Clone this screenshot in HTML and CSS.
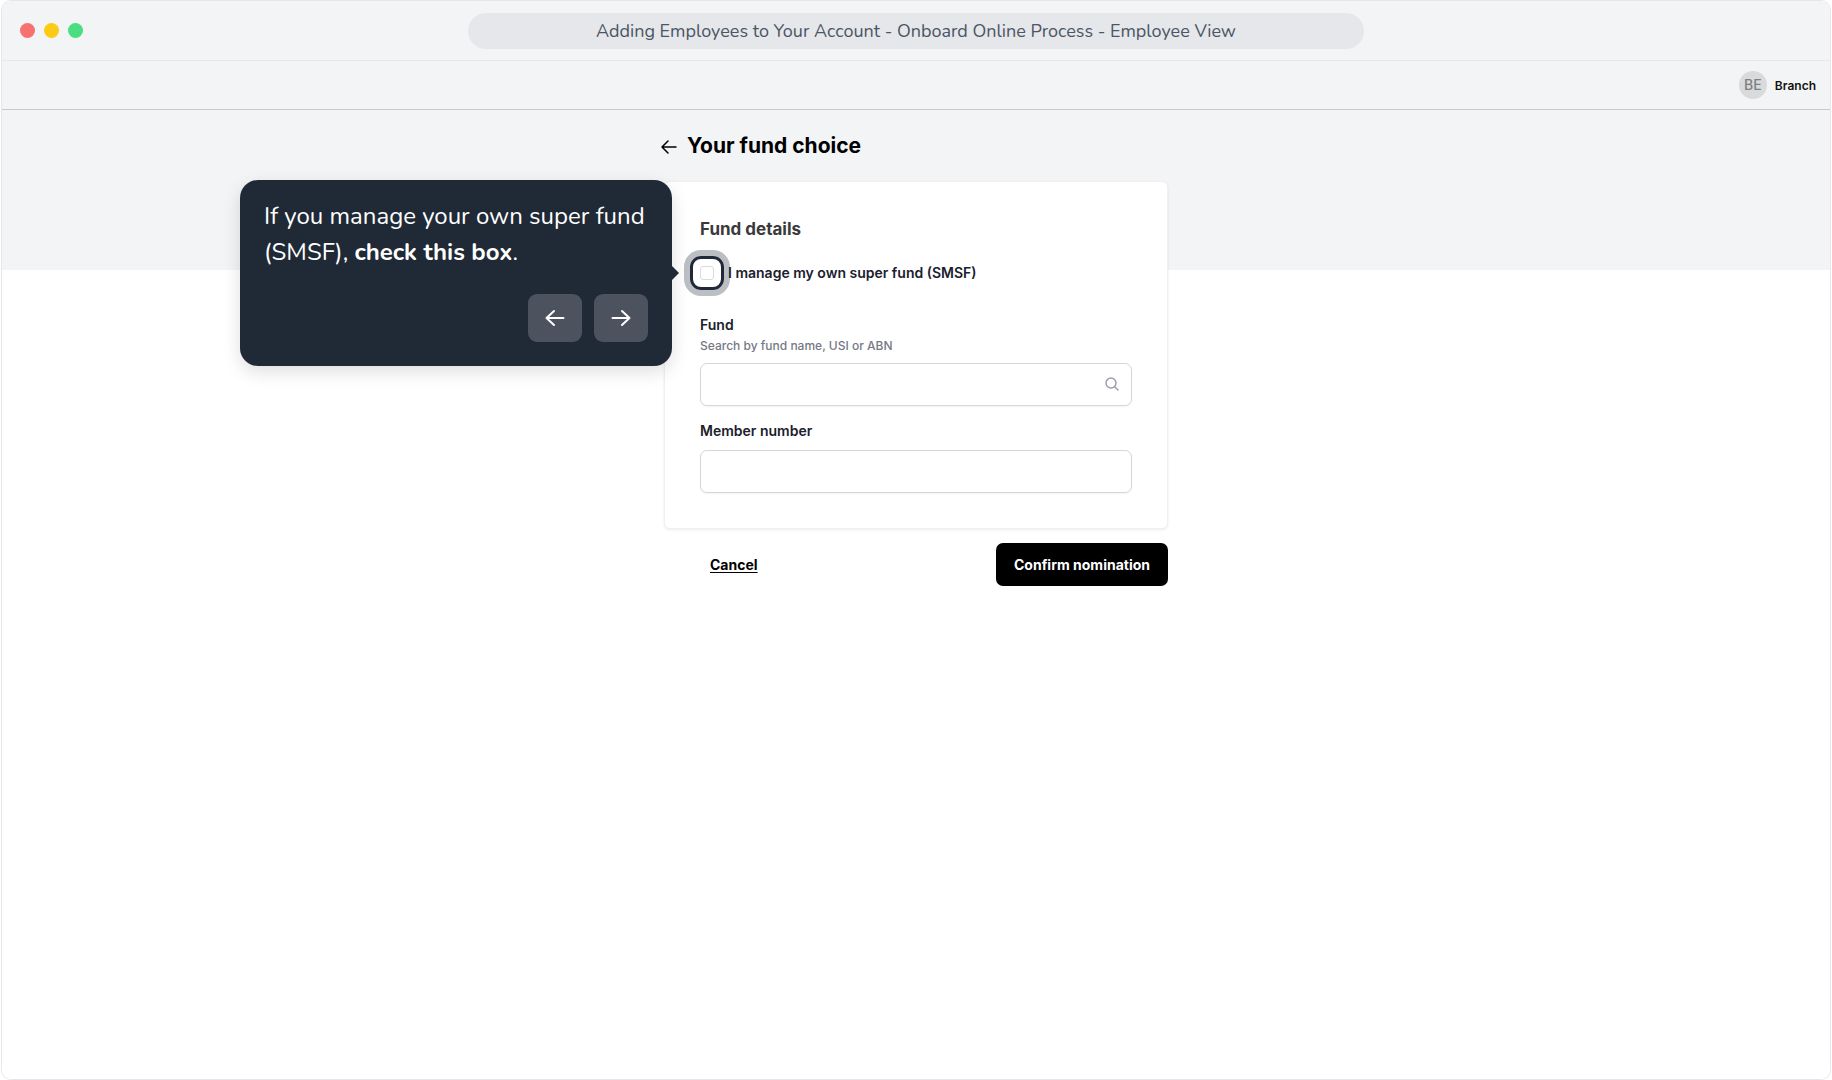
FILE: index.html
```html
<!DOCTYPE html>
<html lang="en">
<head>
    <meta charset="UTF-8">
    <title>Adding Employees to Your Account</title>
    <link rel="stylesheet" href="styles.css">
</head>
<body>
    <div class="window">
        <div class="titlebar">
            <div class="dots">
                <span class="dot red"></span>
                <span class="dot yellow"></span>
                <span class="dot green"></span>
            </div>
            <div class="address">Adding Employees to Your Account - Onboard Online Process - Employee View</div>
        </div>
        <header class="topbar">
            <span class="avatar">BE</span>
            <span class="username">Branch</span>
        </header>
        <main class="page">
            <form class="content">
                <div class="heading">
                    <a class="back" href="#" aria-label="Back">
                        <svg width="16" height="14" viewBox="0 0 16 14" fill="none" stroke="currentColor" stroke-width="1.5" stroke-linecap="round" stroke-linejoin="round"><path d="M15 7H1M7 1L1 7l6 6"/></svg>
                    </a>
                    <h1>Your fund choice</h1>
                </div>
                <section class="card">
                    <h2>Fund details</h2>
                    <div class="check-row">
                        <input type="checkbox" id="smsf">
                        <label for="smsf">I manage my own super fund (SMSF)</label>
                        <span class="highlight"></span>
                        <div class="tooltip">
                            <p>If you manage your own super fund (SMSF), <b>check this box</b>.</p>
                            <div class="tooltip-nav">
                                <button type="button" aria-label="Previous">
                                    <svg width="20" height="18" viewBox="0 0 20 18" fill="none" stroke="currentColor" stroke-width="2" stroke-linecap="round" stroke-linejoin="round"><path d="M18.500 9H1.500M9 2L1.500 9L9 16"/></svg>
                                </button>
                                <button type="button" aria-label="Next">
                                    <svg width="20" height="18" viewBox="0 0 20 18" fill="none" stroke="currentColor" stroke-width="2" stroke-linecap="round" stroke-linejoin="round"><path d="M1.500 9H18.500M11 2L18.500 9L11 16"/></svg>
                                </button>
                            </div>
                        </div>
                    </div>
                    <div class="field">
                        <label for="fund">Fund</label>
                        <span class="hint" id="fund-hint">Search by fund name, USI or ABN</span>
                        <div class="search-box">
                            <input type="text" id="fund" aria-describedby="fund-hint">
                            <svg width="14" height="14" viewBox="0 0 14 14" fill="none" stroke="currentColor" stroke-width="1.500" stroke-linecap="round"><circle cx="6" cy="6" r="5"/><path d="M9.700 9.700L13 13"/></svg>
                        </div>
                    </div>
                    <div class="field">
                        <label for="member">Member number</label>
                        <input type="text" id="member">
                    </div>
                </section>
                <div class="actions">
                    <a class="cancel" href="#">Cancel</a>
                    <button type="submit" class="confirm">Confirm nomination</button>
                </div>
            </form>
        </main>
    </div>
</body>
</html>
```
FILE: styles.css
```css
* {
    box-sizing: border-box;
}
body {
    margin: 0;
    background-color: #fff;
    font-family: Inter, "Liberation Sans", sans-serif;
    font-size: 14px;
    color: #1a202c;
}
h1, h2, p {
    margin: 0;
}
.window {
    display: flex;
    flex-direction: column;
    min-height: 100vh;
    margin: 0 1px;
    border: 1px solid #e5e7eb;
    border-radius: 10px;
    overflow: hidden;
}

/* browser bar */
.titlebar {
    display: grid;
    grid-template-columns: 1fr 896px 1fr;
    align-items: center;
    height: 60px;
    background-color: #f3f4f6;
    border-bottom: 1px solid #e5e7eb;
}
.dots {
    display: flex;
    gap: 9px;
    padding-left: 18px;
}
.dot {
    width: 15px;
    height: 15px;
    border-radius: 50%;
}
.red {
    background-color: #f87171;
}
.yellow {
    background-color: #facc15;
}
.green {
    background-color: #4ade80;
}
.address {
    height: 36px;
    line-height: 36px;
    border-radius: 18px;
    background-color: #e5e7eb;
    color: #4b5563;
    font-family: Nunito, Lato, sans-serif;
    font-size: 18px;
    text-align: center;
}

.topbar {
    display: flex;
    align-items: center;
    justify-content: flex-end;
    gap: 8px;
    height: 49px;
    padding-right: 14px;
    background-color: #f3f4f6;
    border-bottom: 1px solid #c6c9ce;
}
.avatar {
    width: 28px;
    height: 28px;
    border-radius: 50%;
    background-color: #d9dadb;
    color: #7d7f82;
    font-weight: 500;
    line-height: 28px;
    text-align: center;
}
.username {
    color: #111;
    font-size: 12px;
    font-weight: 600;
}

.page {
    flex: 1;
    padding-top: 22px;
    background: linear-gradient(#f3f4f6, #f3f4f6) top / 100% 160px no-repeat #fff;
}
.content {
    max-width: 504px;
    margin: 0 auto;
}
.heading {
    display: flex;
    align-items: center;
    gap: 10px;
    height: 28px;
    margin: 0 0 21px -3px;
}
.back {
    display: flex;
    padding-top: 2px;
    color: #000;
}
h1 {
    color: #000;
    font-size: 21px;
    font-weight: 700;
    line-height: 28px;
}
.card {
    padding: 35px;
    background-color: #fff;
    border: 1px solid #eff0f1;
    border-radius: 6px;
    box-shadow: 0 1px 3px rgba(0, 0, 0, 0.08);
}
h2 {
    color: #3a3a3a;
    font-size: 17px;
    font-weight: 700;
    line-height: 24px;
}
.check-row {
    position: relative;
    display: flex;
    align-items: center;
    gap: 14px;
    height: 20px;
    margin: 22px 0 32px;
}
.check-row label,
.field label {
    font-weight: 600;
    line-height: 20px;
}
.check-row input {
    appearance: none;
    width: 14px;
    height: 14px;
    margin: 0;
    border: 1px solid #d8dbe0;
    border-radius: 3px;
    background-color: #fff;
}
/* ring around the checkbox, over the start of its label */
.highlight {
    position: absolute;
    top: -7px;
    left: -10px;
    width: 34px;
    height: 34px;
    border: 3px solid #1f2937;
    border-radius: 11px;
    box-shadow: 0 0 0 6px rgba(31, 41, 55, 0.3);
    pointer-events: none;
}
.tooltip {
    position: absolute;
    top: 50%;
    right: calc(100% + 28px);
    width: 432px;
    padding: 18px 24px 24px;
    border-radius: 18px;
    background-color: #1f2a36;
    box-shadow: 0 6px 18px rgba(0, 0, 0, 0.13);
    color: #fff;
    font-family: Nunito, Lato, sans-serif;
    font-size: 24px;
    line-height: 36px;
    transform: translateY(-50%);
}
.tooltip::after {
    content: "";
    position: absolute;
    top: calc(50% - 7px);
    left: 100%;
    border: 7px solid transparent;
    border-left-color: #1f2a36;
    border-right: none;
}
.tooltip-nav {
    display: flex;
    justify-content: flex-end;
    gap: 12px;
    margin-top: 24px;
}
.tooltip-nav button {
    display: flex;
    align-items: center;
    justify-content: center;
    width: 54px;
    height: 48px;
    padding: 0;
    border: none;
    border-radius: 9px;
    background-color: #4c535f;
    color: #fff;
    cursor: pointer;
}

.field {
    display: flex;
    flex-direction: column;
}
.field + .field {
    margin-top: 15px;
}
.field label {
    margin-bottom: 9px;
}
.field .hint {
    margin: -8px 0 7px;
    color: #747985;
    font-size: 12px;
    font-weight: 500;
    line-height: 20px;
}
.field input {
    width: 100%;
    height: 43px;
    padding: 0 12px;
    border: 1px solid #d4d6dc;
    border-radius: 7px;
    background-color: #fff;
    box-shadow: 0 1px 2px rgba(0, 0, 0, 0.05);
    font: inherit;
}
.search-box {
    position: relative;
}
.search-box svg {
    position: absolute;
    top: 14px;
    right: 13px;
    color: #9a9fab;
}

.actions {
    display: flex;
    align-items: center;
    justify-content: space-between;
    margin-top: 14px;
    padding-left: 46px;
}
.cancel {
    color: #000;
    font-weight: 700;
    text-underline-offset: 2px;
}
.confirm {
    height: 43px;
    padding: 0 18px;
    border: none;
    border-radius: 7px;
    background-color: #000;
    color: #fff;
    font: inherit;
    font-weight: 700;
    cursor: pointer;
}
```
